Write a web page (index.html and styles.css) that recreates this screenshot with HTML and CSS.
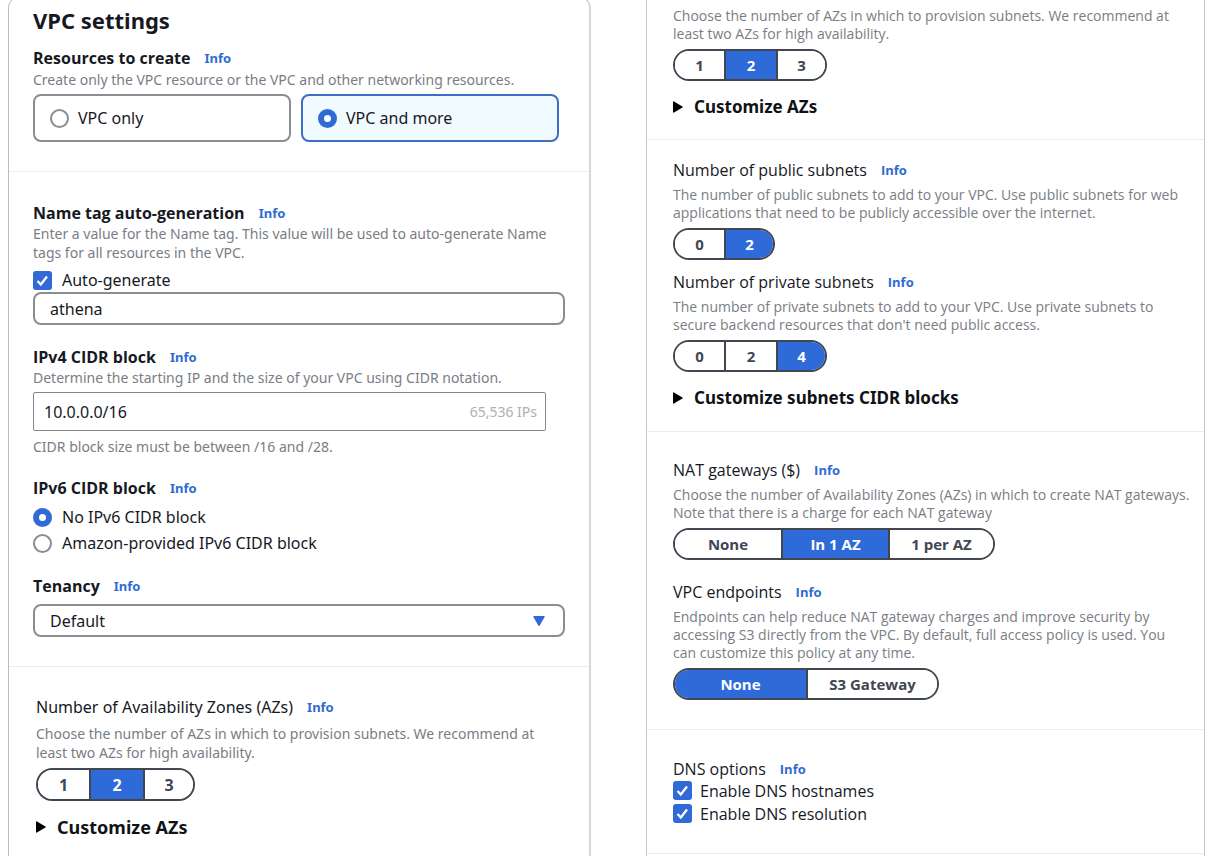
FILE: index.html
```html
<!DOCTYPE html>
<html lang="en">
<head>
<meta charset="utf-8">
<title>VPC settings</title>
<link rel="stylesheet" href="styles.css">
</head>
<body>
<main class="page">
  <form class="panel panel-first">
    <section class="section section-resources">
      <h1 class="title">VPC settings</h1>
      <div class="heading"><h2 class="label strong">Resources to create</h2><a class="info" href="#">Info</a></div>
      <p class="hint">Create only the VPC resource or the VPC and other networking resources.</p>
      <div class="tiles">
        <label class="tile"><input class="radio" type="radio" name="resources">VPC only</label>
        <label class="tile tile-selected"><input class="radio" type="radio" name="resources" checked>VPC and more</label>
      </div>
    </section>

    <section class="section section-details">
      <div class="field">
        <div class="heading"><h2 class="label strong">Name tag auto-generation</h2><a class="info" href="#">Info</a></div>
        <p class="hint">Enter a value for the Name tag. This value will be used to auto-generate Name<br>tags for all resources in the VPC.</p>
        <label class="choice choice-auto"><input class="checkbox" type="checkbox" checked>Auto-generate</label>
        <input class="text-input" type="text" value="athena" aria-label="Name tag">
      </div>
      <div class="field">
        <div class="heading"><label class="label strong" for="ipv4">IPv4 CIDR block</label><a class="info" href="#">Info</a></div>
        <p class="hint">Determine the starting IP and the size of your VPC using CIDR notation.</p>
        <div class="cidr"><input class="cidr-input" id="ipv4" type="text" value="10.0.0.0/16"><span class="cidr-count">65,536 IPs</span></div>
        <p class="hint">CIDR block size must be between /16 and /28.</p>
      </div>
      <div class="field">
        <div class="heading"><h2 class="label strong">IPv6 CIDR block</h2><a class="info" href="#">Info</a></div>
        <div class="radio-list">
          <label class="choice"><input class="radio" type="radio" name="ipv6" checked>No IPv6 CIDR block</label>
          <label class="choice"><input class="radio" type="radio" name="ipv6">Amazon-provided IPv6 CIDR block</label>
        </div>
      </div>
      <div class="field">
        <div class="heading"><label class="label strong" for="tenancy">Tenancy</label><a class="info" href="#">Info</a></div>
        <div class="select-box">
          <select class="select" id="tenancy"><option>Default</option></select>
          <svg class="select-arrow" viewBox="0 0 12 10" aria-hidden="true"><path d="M1 0h10q1 0 .6 1L6.700 9.400q-.7 1-1.400 0L.4 1Q0 0 1 0z"/></svg>
        </div>
      </div>
    </section>

    <section class="section section-zones">
      <div class="heading"><h2 class="label">Number of Availability Zones (AZs)</h2><a class="info" href="#">Info</a></div>
      <p class="hint">Choose the number of AZs in which to provision subnets. We recommend at<br>least two AZs for high availability.</p>
      <div class="segments">
        <button class="segment" type="button">1</button><button class="segment segment-on" type="button">2</button><button class="segment" type="button">3</button>
      </div>
      <button class="expander" type="button"><svg class="caret" viewBox="0 0 10 12" aria-hidden="true"><path d="M0 1q0-1 1-.6L9.400 5.400q.8.600 0 1.200L1 11.600q-1 .4-1-.6z"/></svg>Customize AZs</button>
    </section>
  </form>

  <form class="panel panel-second">
    <section class="section section-top">
      <p class="hint">Choose the number of AZs in which to provision subnets. We recommend at<br>least two AZs for high availability.</p>
      <div class="segments">
        <button class="segment" type="button">1</button><button class="segment segment-on" type="button">2</button><button class="segment" type="button">3</button>
      </div>
      <button class="expander" type="button"><svg class="caret" viewBox="0 0 10 12" aria-hidden="true"><path d="M0 1q0-1 1-.6L9.400 5.400q.8.600 0 1.200L1 11.600q-1 .4-1-.6z"/></svg>Customize AZs</button>
    </section>

    <section class="section section-subnets">
      <div class="heading"><h2 class="label">Number of public subnets</h2><a class="info" href="#">Info</a></div>
      <p class="hint">The number of public subnets to add to your VPC. Use public subnets for web<br>applications that need to be publicly accessible over the internet.</p>
      <div class="segments">
        <button class="segment" type="button">0</button><button class="segment segment-on" type="button">2</button>
      </div>
      <div class="heading heading-next"><h2 class="label">Number of private subnets</h2><a class="info" href="#">Info</a></div>
      <p class="hint">The number of private subnets to add to your VPC. Use private subnets to<br>secure backend resources that don't need public access.</p>
      <div class="segments">
        <button class="segment" type="button">0</button><button class="segment" type="button">2</button><button class="segment segment-on" type="button">4</button>
      </div>
      <button class="expander" type="button"><svg class="caret" viewBox="0 0 10 12" aria-hidden="true"><path d="M0 1q0-1 1-.6L9.400 5.400q.8.600 0 1.200L1 11.600q-1 .4-1-.6z"/></svg>Customize subnets CIDR blocks</button>
    </section>

    <section class="section section-gateways">
      <div class="heading"><h2 class="label">NAT gateways ($)</h2><a class="info" href="#">Info</a></div>
      <p class="hint">Choose the number of Availability Zones (AZs) in which to create NAT gateways.<br>Note that there is a charge for each NAT gateway</p>
      <div class="segments segments-wide">
        <button class="segment" type="button">None</button><button class="segment segment-on" type="button">In 1 AZ</button><button class="segment" type="button">1 per AZ</button>
      </div>
      <div class="heading heading-far"><h2 class="label">VPC endpoints</h2><a class="info" href="#">Info</a></div>
      <p class="hint">Endpoints can help reduce NAT gateway charges and improve security by<br>accessing S3 directly from the VPC. By default, full access policy is used. You<br>can customize this policy at any time.</p>
      <div class="segments segments-widest">
        <button class="segment segment-on" type="button">None</button><button class="segment" type="button">S3 Gateway</button>
      </div>
    </section>

    <section class="section section-dns">
      <div class="heading"><h2 class="label">DNS options</h2><a class="info" href="#">Info</a></div>
      <label class="choice"><input class="checkbox" type="checkbox" checked>Enable DNS hostnames</label>
      <label class="choice"><input class="checkbox" type="checkbox" checked>Enable DNS resolution</label>
    </section>
    <section class="section section-end"></section>
  </form>
</main>
</body>
</html>
```
FILE: styles.css
```css
* { box-sizing: border-box; }
body {
  margin: 0;
  background: #fff;
  color: #16191f;
  font: 16px/20px "Noto Sans", "Open Sans", sans-serif;
}
h1, h2, p { margin: 0; }
button, input, select { font: inherit; color: inherit; margin: 0; }

.page {
  display: grid;
  grid-template-columns: minmax(0, 583fr) minmax(0, 559fr);
  column-gap: 55px;
  padding: 0 13px 0 8px;
  min-height: 100vh;
}
.panel {
  display: flex;
  flex-direction: column;
  border: solid #d5d6d9;
  border-width: 0 2px 0 1px;
}
.panel-first {
  margin-top: -4px;
  padding-top: 3px;
  border-left-color: #b9bbc0;
  border-top-width: 1px;
  border-radius: 12px 12px 0 0;
}
.panel-second { border-right-width: 1px; border-color: #c4c6ca; font-family: "Open Sans", "Noto Sans", sans-serif; }
.section + .section { border-top: 1px solid #e9ebed; }

.title { font-size: 22px; line-height: 28px; }
.heading { display: flex; align-items: center; gap: 14px; height: 20px; }
.label { font-size: 16px; font-weight: 400; line-height: 20px; white-space: nowrap; }
.strong { font-family: "Open Sans", "Noto Sans", sans-serif; font-weight: 700; }
.info { color: #2f6bd0; font-size: 13px; font-weight: 700; line-height: 20px; text-decoration: none; }
.hint { color: #7a7d84; font-size: 14px; line-height: 19px; white-space: nowrap; }

.section-resources { padding: 6px 30px 29px 24px; }
.section-resources .heading { margin-top: 14px; }
.section-resources .hint { margin-top: 2px; }
.section-details { padding: 31px 24px 29px; }
.section-details .hint { margin-top: 1px; }
.section-zones { padding: 30px 24px 16px 27px; }
.section-zones .hint { margin-top: 7px; }

.tiles { display: grid; grid-template-columns: 1fr 1fr; gap: 10px; margin-top: 5px; }
.tile {
  display: flex;
  align-items: center;
  gap: 9px;
  height: 48px;
  padding: 0 15px;
  border: 2px solid #8c8c94;
  border-radius: 8px;
}
.tile-selected { border-color: #3a6fc4; background: #f1faff; }

.radio, .checkbox { appearance: none; flex: none; width: 19px; height: 19px; background: #fff; }
.radio { border: 2px solid #8c8c94; border-radius: 50%; }
.radio:checked { border: 6px solid #2f6ad6; }
.checkbox {
  border-radius: 3px;
  background: #2f6ad6 url("data:image/svg+xml,%3Csvg xmlns='http://www.w3.org/2000/svg' viewBox='0 0 19 19'%3E%3Cpath d='M4.500 10l3.300 3.500L14 5.500' fill='none' stroke='white' stroke-width='2.300'/%3E%3C/svg%3E") center / 100%;
}
.choice { display: flex; align-items: center; gap: 10px; height: 20px; }
.choice-auto { margin-top: 8px; }
.radio-list { display: grid; gap: 6px; margin-top: 9px; padding-bottom: 1px; }

.field + .field { margin-top: 22px; }
.text-input, .select {
  display: block;
  width: 100%;
  height: 33px;
  padding: 0 15px;
  border: 2px solid #8c8c94;
  border-radius: 8px;
  background: #fff;
}
.text-input { margin-top: 2px; }
.cidr {
  display: flex;
  align-items: center;
  gap: 8px;
  height: 39px;
  margin: 5px 19px 6px 0;
  padding: 0 8px 0 10px;
  border: 1px solid #85888d;
  border-radius: 2px;
}
.cidr-input { flex: 1; min-width: 0; padding: 0; border: 0; background: none; }
.cidr-count { color: #acafb4; font-size: 14px; }
.select-box { position: relative; margin-top: 8px; }
.select { appearance: none; }
.select-arrow { position: absolute; top: 12px; right: 20px; width: 12px; height: 10px; fill: #2f6ad6; }

.segments { display: inline-flex; height: 33px; border: 2px solid #424650; border-radius: 17px; overflow: hidden; }
.segment {
  width: 51px;
  padding: 0;
  border: 0;
  background: #fff;
  color: #424650;
  font-family: "Open Sans", "Noto Sans", sans-serif;
  font-size: 16px;
  font-weight: 700;
}
.segment + .segment { width: 54px; border-left: 2px solid #424650; }
.segment + .segment:last-child { width: 50px; }
.segment-on { background: #2f6ad9; color: #fff; }
.expander {
  display: flex;
  align-items: center;
  gap: 11px;
  height: 24px;
  margin-top: 14px;
  padding: 0;
  border: 0;
  background: none;
  color: #0f1216;
  font-size: 18px;
  font-weight: 700;
}
.caret { width: 10px; height: 12px; }
.section-zones .segments { margin-top: 6px; }

.panel-second .section { padding-left: 26px; padding-right: 26px; }
.panel-second .segments { height: 32px; margin-top: 6px; }
.panel-second .segment { width: 49px; font-size: 15px; }
.panel-second .segment + .segment { width: 52px; }
.panel-second .segment + .segment:last-child { width: 49px; }
.panel-second .segments-wide .segment { width: 106px; }
.panel-second .segments-wide .segment + .segment { width: 107px; }
.panel-second .segments-wide .segment + .segment:last-child { width: 105px; }
.panel-second .segments-widest .segment,
.panel-second .segments-widest .segment + .segment:last-child { width: 131px; }
.panel-second .expander { font-family: "Noto Sans", "Open Sans", sans-serif; font-size: 17px; }
.panel-second .hint { margin-top: 6px; line-height: 18px; }
.panel-second .section-top { padding-top: 1px; padding-bottom: 20px; }
.section-subnets { padding-top: 20px; padding-bottom: 21px; }
.section-gateways { padding-top: 28px; padding-bottom: 29px; }
.section-dns { padding-top: 29px; padding-bottom: 28px; }
.section-dns .choice { height: 23px; gap: 8px; }
.heading-next { margin-top: 12px; }
.heading-far { margin-top: 22px; }
```
